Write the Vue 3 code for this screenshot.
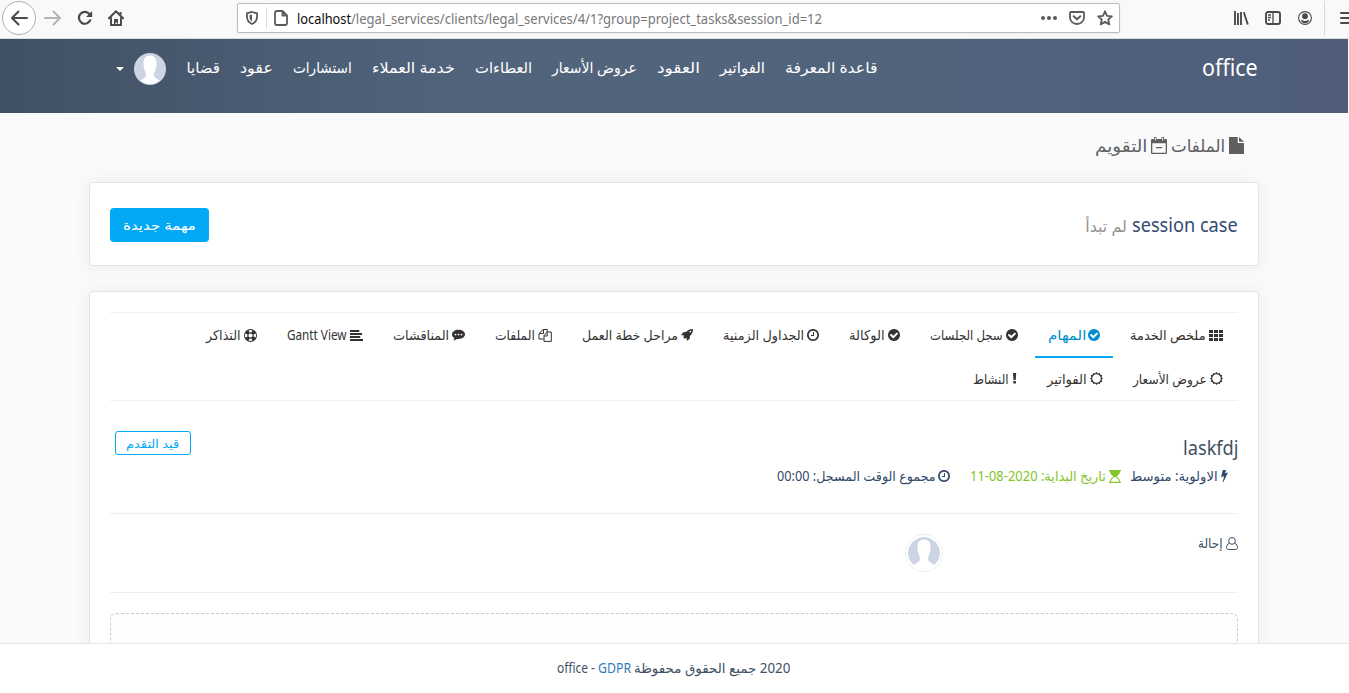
<script setup>
import { h } from 'vue'

// Stretches a run of text horizontally so that it fills its slot.
const stretch = (vnode, w) => {
  const el = vnode.el.firstChild
  el.style.transform = `scaleX(${w / el.offsetWidth})`
}
const Fit = (props) =>
  h('span', {
    class: 'fit',
    style: { width: props.w + 'px' },
    onVnodeMounted: (v) => stretch(v, props.w),
  }, [h('span', { class: 'fit-in' }, props.t)])
Fit.props = ['w', 't']

const check = { vb: '128 128 1536 1536', d: 'M1412 734q0-28-18-46l-91-90q-19-19-45-19t-45 19l-408 407-226-226q-19-19-45-19t-45 19l-91 90q-18 18-18 46 0 27 18 45l362 362q19 19 45 19 27 0 46-19l543-543q18-18 18-45zm252 162q0 209-103 385.5t-279.5 279.5-385.5 103-385.5-103-279.5-279.5-103-385.5 103-385.5 279.5-279.5 385.5-103 385.5 103 279.5 279.5 103 385.5z' }
const clock = { vb: '128 128 1536 1536', d: 'M1024 544v448q0 14-9 23t-23 9h-320q-14 0-23-9t-9-23v-64q0-14 9-23t23-9h224v-352q0-14 9-23t23-9h64q14 0 23 9t9 23zm416 352q0-148-73-273t-198-198-273-73-273 73-198 198-73 273 73 273 198 198 273 73 273-73 198-198 73-273zm224 0q0 209-103 385.5t-279.5 279.5-385.5 103-385.5-103-279.5-279.5-103-385.5 103-385.5 279.5-279.5 385.5-103 385.5 103 279.5 279.5 103 385.5z' }
const icons = {
  check,
  clock,
  grid: { vb: '0 0 14 11', d: 'M0 0h4v3H0zM5 0h4v3H5zM10 0h4v3h-4zM0 4h4v3H0zM5 4h4v3H5zM10 4h4v3h-4zM0 8h4v3H0zM5 8h4v3H5zM10 8h4v3h-4z' },
  rocket: { vb: '0 0 12 12', d: 'M12 0C9 0 6.800.9 5 3.100L2.300 3.200 0 6.300l2.500-.1.500.6-.7 1.400 1.500 1.500 1.400-.7.6.5-.1 2.500 3.100-2.300.1-2.700C11.100 5.200 12 3 12 0zM9.400 1.700a.9.9 0 1 1 0 1.800.9.9 0 0 1 0-1.800z' },
  files: { vb: '0 0 14 13', d: 'M5.500 3.500V.5h3.700v2.500M5.200.5L1 4.500V10h4.500M5.500.8V4.500H1.200M9.200 3.500V7H6M9.200 3h4.100v9.400H6V6.600L9.200 3', line: true },
  comment: { vb: '0 0 13 12', d: 'M6.500.8C2.900.8 0 2.900 0 5.600c0 1.500.9 2.900 2.400 3.700-.2.900-.7 1.600-1.300 2.300 1.500-.2 2.800-.8 3.800-1.700.5.1 1 .1 1.600.1 3.600 0 6.500-2.100 6.500-4.700S10.100.8 6.500.8zM3.500 4.700a.9.900 0 1 1 0 1.800.9.900 0 0 1 0-1.800zm3 0a.9.900 0 1 1 0 1.800.9.900 0 0 1 0-1.800zm3 0a.9.900 0 1 1 0 1.800.9.900 0 0 1 0-1.800z' },
  bars: { vb: '0 0 14 11', d: 'M0 0h10v2H0zM0 3h13v2H0zM0 6h11v2H0zM0 9h14v2H0z' },
  ring: { vb: '0 0 13 13', d: 'M6.500 0a6.500 6.500 0 1 0 0 13 6.500 6.500 0 0 0 0-13zM4.600 1.400a5.400 5.400 0 0 1 3.800 0L7.500 3.500a3 3 0 0 0-2 0zM1.400 4.600l2.100.9a3 3 0 0 0 0 2l-2.100.9a5.400 5.400 0 0 1 0-3.800zM8.400 11.600a5.400 5.400 0 0 1-3.800 0l.9-2.100a3 3 0 0 0 2 0zM6.500 8.600a2.100 2.100 0 1 1 0-4.200 2.100 2.100 0 0 1 0 4.200zM11.600 8.400l-2.100-.9a3 3 0 0 0 0-2l2.100-.9a5.400 5.400 0 0 1 0 3.800z' },
  cog: { vb: '0 0 13 13', d: 'M6.500 0l1.400 1.500 1.900-.6.500 1.900 1.900.5-.6 1.900L13 6.500l-1.400 1.300.6 1.900-1.900.5-.5 1.900-1.900-.6L6.500 13l-1.400-1.500-1.900.6-.5-1.900-1.900-.5.6-1.900L0 6.500l1.400-1.300-.6-1.900 1.900-.5.500-1.900 1.900.6zM6.500 2.200a4.300 4.300 0 1 0 0 8.600 4.300 4.300 0 0 0 0-8.600z' },
  bang: { vb: '0 0 5 11', d: 'M1 0h3.200l-.5 7H1.500zM1.300 8.100h2.600v2.500H1.300z' },
  bolt: { vb: '0 0 7 12', d: 'M1.800 0h3.400L4 3.200 7 2.600 2.400 12H1.700l1.400-5.700L0 7z' },
  hourglass: { vb: '0 0 12 13', d: 'M0 0h12v1.300H0zM0 11.700h12V13H0zM1 1.300h10C11 4 9.200 5.500 7.500 6.500 9.200 7.500 11 9 11 11.700h-1C9.800 9.300 8 8 6.500 7h-1C4 8 2.200 9.300 2 11.700H1C1 9 2.800 7.500 4.500 6.500 2.800 5.500 1 4 1 1.300z' },
  user: { vb: '0 0 12 13', d: 'M3.200 6.300C1.500 7 .5 8.700.5 10.500c0 1.100.7 2 1.700 2h7.600c1 0 1.700-.9 1.700-2 0-1.800-1-3.500-2.700-4.200M6 .5a3.300 3.300 0 1 1 0 6.800A3.300 3.300 0 0 1 6 .5z', line: true },
  file: { vb: '0 0 15 17', d: 'M0 0h8.700v5.200q0 .9.900.9H15V17H0zM10 0l5 4.800h-5z' },
  calendar: { vb: '0 0 16 17', d: 'M3 0h2.500v2h5V0H13v2h1.800Q16 2 16 3.200v12.600q0 1.200-1.200 1.200H1.200Q0 17 0 15.800V3.200Q0 2 1.200 2H3zM1.300 6.300v9.400h13.400V6.300zM5 10h6v1.300H5zM3.800.8v2.600h1V.8zM11.200.8v2.600h1V.8z' },
}
const Icon = (p) => h('svg', {
  viewBox: icons[p.n].vb, width: p.w, height: p.h, class: 'icon', preserveAspectRatio: 'none',
}, [h('path', {
  d: icons[p.n].d, 'fill-rule': 'evenodd',
  fill: icons[p.n].line ? 'none' : 'currentColor',
  stroke: icons[p.n].line ? 'currentColor' : 'none',
})])
Icon.props = ['n', 'w', 'h']

const nav = [
  ['قاعدة المعرفة', 92], ['الفواتير', 45], ['العقود', 43], ['عروض الأسعار', 85], ['العطاءات', 57],
  ['خدمة العملاء', 83], ['استشارات', 59], ['عقود', 33], ['قضايا', 34],
]
// label, text width, icon, icon width, icon height
const tabs = [
  [
    ['ملخص الخدمة', 76, 'grid', 14, 11], ['المهام', 38, 'check', 12, 12, true], ['سجل الجلسات', 73, 'check', 12, 12],
    ['الوكالة', 36, 'check', 12, 12], ['الجداول الزمنية', 81, 'clock', 12, 12], ['مراحل خطة العمل', 96, 'rocket', 12, 12],
    ['الملفات', 40, 'files', 14, 13], ['المناقشات', 56, 'comment', 13, 12], ['Gantt View', 60, 'bars', 13, 11],
    ['التذاكر', 35, 'ring', 13, 13],
  ],
  [['عروض الأسعار', 74, 'cog', 13, 13], ['الفواتير', 40, 'cog', 13, 13], ['النشاط', 36, 'bang', 5, 11]],
]
</script>

<template>
  <div class="page">
    <div class="chrome" dir="ltr">
      <div class="tools">
        <span class="back"><svg width="18" height="16" viewBox="0 0 18 16"><path d="M17 8H2M8.500 1.500L2 8l6.500 6.500" fill="none" stroke="#4a4a4c" stroke-width="2" stroke-linecap="round" stroke-linejoin="round" /></svg></span>
        <svg class="fwd" width="18" height="16" viewBox="0 0 18 16"><path d="M1 8h15M9.500 1.500L16 8l-6.500 6.500" fill="none" stroke="#b4b4b6" stroke-width="2" stroke-linecap="round" stroke-linejoin="round" /></svg>
        <svg class="reload" width="16" height="16" viewBox="0 0 16 16"><path d="M13.200 10.300A5.900 5.900 0 1 1 12.500 4.200" fill="none" stroke="#4a4a4c" stroke-width="2.200" stroke-linecap="round" /><path d="M15.200 1v6H9z" fill="#4a4a4c" /></svg>
        <svg class="home" width="16" height="16" viewBox="0 0 16 16"><path d="M1 8.300L8 1.300l7 7M3 8v7h10V8" fill="none" stroke="#4a4a4c" stroke-width="2" stroke-linecap="round" stroke-linejoin="round" /><path d="M6 9h4v6H9.200v-2.500H7.500V15H6zM11.500 2h2v3.500l-2-2z" fill="#4a4a4c" /></svg>
      </div>
      <div class="url">
        <svg width="12" height="14" viewBox="0 0 12 14"><path d="M6 1l5 1.300V6c0 3-1.800 5.500-5 7-3.200-1.500-5-4-5-7V2.300z" fill="none" stroke="#5a5a5c" stroke-width="1.800" /><path d="M6 3.500v7C4.300 9.300 3.500 8 3.500 6V4.100z" fill="#5a5a5c" /></svg>
        <i class="sep"></i>
        <svg width="14" height="16" viewBox="0 0 14 16"><path d="M3 1h5.500L13 5.500V13q0 2-2 2H3q-2 0-2-2V3q0-2 2-2zM8.500 1v4.500H13" fill="none" stroke="#5a5a5c" stroke-width="1.800" stroke-linejoin="round" /></svg>
        <span class="addr"><span class="host"><Fit :w="54" t="localhost" /></span><Fit :w="471" t="/legal_services/clients/legal_services/4/1?group=project_tasks&session_id=12" /></span>
        <span class="url-end">
          <svg width="16" height="4" viewBox="0 0 16 4"><g fill="#5a5a5c"><circle cx="2" cy="2" r="2" /><circle cx="8" cy="2" r="2" /><circle cx="14" cy="2" r="2" /></g></svg>
          <svg width="16" height="14" viewBox="0 0 16 14"><path d="M2 1h12q1 0 1 1v4.500a7 6.500 0 0 1-14 0V2q0-1 1-1z" fill="none" stroke="#5a5a5c" stroke-width="1.800" /><path d="M4.700 5.200L8 8.300l3.300-3.100" fill="none" stroke="#5a5a5c" stroke-width="2" stroke-linecap="round" stroke-linejoin="round" /></svg>
          <svg width="16" height="16" viewBox="0 0 16 16"><path d="M8 1.300l2 4.500 4.900.5-3.700 3.200 1.100 4.900L8 11.900l-4.300 2.500 1.100-4.900L1.100 6.300 6 5.800z" fill="none" stroke="#5a5a5c" stroke-width="1.800" stroke-linejoin="round" /></svg>
        </span>
      </div>
      <div class="right-tools">
        <svg width="16" height="14" viewBox="0 0 16 14"><path d="M2 0v14M5 2v12M8 1v13M10.800 1.300l4 12.200" fill="none" stroke="#4a4a4c" stroke-width="1.900" /></svg>
        <svg width="16" height="14" viewBox="0 0 16 14"><rect x="1" y="1" width="14" height="12" rx="2" fill="none" stroke="#4a4a4c" stroke-width="1.900" /><path d="M8 1v12M3 4h3M3 6.500h3M3 9h2" stroke="#4a4a4c" stroke-width="1.300" /></svg>
        <svg width="14" height="14" viewBox="0 0 14 14"><circle cx="7" cy="7" r="6.400" fill="none" stroke="#4a4a4c" stroke-width="1.100" /><circle cx="7" cy="5.200" r="2.900" fill="#4a4a4c" /><path d="M2.800 8.700q1.500.4 2.200.7 2 1.100 4 0 .7-.3 2.200-.7-.9 3.500-4.200 3.500T2.800 8.700z" fill="#4a4a4c" /></svg>
        <i class="rsep"></i>
        <svg width="9" height="12" viewBox="0 0 9 12"><path d="M1 1h9M1 6h9M1 11h9" stroke="#4a4a4c" stroke-width="2" stroke-linecap="round" /></svg>
      </div>
    </div>

    <header class="nav">
      <span class="brand"><Fit :w="56" t="office" /></span>
      <nav class="links">
        <a v-for="n in nav" :key="n[0]"><Fit :w="n[1]" :t="n[0]" /></a>
        <svg class="avatar" width="32" height="32" viewBox="0 0 32 32"><circle cx="16" cy="16" r="16" fill="#cdd4e4" /><path d="M16 2.500c4.200 0 6.500 3 6.500 7.500 0 2.500-.3 5-1 7-.7 1.800-1.500 2.500-1.500 4.500 0 3.500 3 4.500 6 6a16 16 0 0 1-20 0c3-1.500 6-2.500 6-6 0-2-.8-2.700-1.500-4.500-.7-2-1-4.500-1-7 0-4.500 2.300-7.500 6.500-7.500z" fill="#fff" /></svg>
        <i class="caret"></i>
      </nav>
    </header>

    <main class="content">
      <div class="quick">
        <Icon n="file" :w="15" :h="17" /><Fit :w="54" t="الملفات" />
        <Icon n="calendar" :w="16" :h="17" /><Fit :w="52" t="التقويم" />
      </div>

      <section class="card head">
        <div class="title"><Fit :w="106" t="session case" /><span class="muted"><Fit :w="42" t="لم تبدأ" /></span></div>
        <button class="btn"><Fit :w="73" t="مهمة جديدة" /></button>
      </section>

      <section class="card body">
        <div class="tabs">
          <div v-for="(row, i) in tabs" :key="i" class="row">
            <a v-for="t in row" :key="t[0]" :class="{ active: t[5] }">
              <Icon :n="t[2]" :w="t[3]" :h="t[4]" /><Fit :w="t[1]" :t="t[0]" />
            </a>
          </div>
        </div>

        <div class="task">
          <div>
            <div class="name"><Fit :w="55" t="laskfdj" /></div>
            <div class="meta">
              <span class="m"><Icon n="bolt" :w="7" :h="12" /><Fit :w="88" t="الاولوية: متوسط" /></span>
              <span class="m green"><Icon n="hourglass" :w="12" :h="13" /><Fit :w="136" t="تاريخ البداية: 2020-08-11" /></span>
              <span class="m last"><Icon n="clock" :w="12" :h="12" /><Fit :w="159" t="مجموع الوقت المسجل: 00:00" /></span>
            </div>
          </div>
          <span class="status"><Fit :w="53" t="قيد التقدم" /></span>
        </div>

        <div class="assign">
          <span class="who"><Icon n="user" :w="12" :h="13" /><Fit :w="25" t="إحالة" /></span>
          <span class="face"><svg width="32" height="32" viewBox="0 0 32 32"><circle cx="16" cy="16" r="16" fill="#cdd4e4" /><path d="M16 2.500c4.200 0 6.500 3 6.500 7.500 0 2.500-.3 5-1 7-.7 1.800-1.500 2.500-1.500 4.500 0 3.500 3 4.500 6 6l0 4.500H6v-4.500c3-1.500 6-2.500 6-6 0-2-.8-2.700-1.500-4.500-.7-2-1-4.500-1-7 0-4.500 2.300-7.500 6.500-7.500z" fill="#fff" /></svg></span>
        </div>
        <div class="drop"></div>
      </section>
    </main>

    <footer class="foot">
      <Fit :w="156" t="2020 جميع الحقوق محفوظة" />
      <a><Fit :w="33" t="GDPR" /></a>
      <Fit :w="38" t="- office" />
    </footer>
  </div>
</template>

<style>
html, body { overflow: hidden; background: #f9fafc; }
.fit { display: inline-flex; flex: none; white-space: nowrap; }
.fit-in { flex: none; transform-origin: 100% 50%; }
[dir="ltr"] .fit-in { transform-origin: 0 50%; }
.icon { flex: none; display: block; }
</style>

<style scoped>
* { box-sizing: border-box; }
.page {
  width: 1349px; height: 693px; overflow: hidden; direction: rtl;
  display: flex; flex-direction: column; background: #f9fafc; color: #415165;
  font-family: "Noto Sans", "DejaVu Sans", sans-serif; font-size: 13.500px; line-height: 18px;
}
.chrome {
  direction: ltr; height: 39px; flex: none; background: #f9f9fa; border-bottom: 1px solid #dcdcdc;
  display: flex; align-items: flex-start; overflow: hidden;
}
.tools { width: 237px; height: 36px; display: flex; align-items: center; padding-left: 2px; }
.back {
  width: 34px; height: 34px; border: 1px solid #b0b0b2; border-radius: 50%; background: #fff;
  display: flex; align-items: center; justify-content: center;
}
.fwd { margin-left: 8px; }
.reload { margin-left: 15px; }
.home { margin-left: 15px; }
.url {
  width: 883px; height: 30px; margin-top: 3px; background: #fff; border: 1px solid #bcbcbe; border-radius: 2px;
  display: flex; align-items: center; padding: 0 6px 0 8px; box-shadow: 0 1px 3px rgba(0,0,0,.05);
}
.sep { width: 1px; height: 22px; background: #dedede; margin: 0 7px 0 8px; }
.addr { display: flex; margin-left: 9px; padding-top: 2px; font-size: 14px; color: #77777a; }
.host { color: #0c0c0d; display: flex; }
.url-end { margin-left: auto; display: flex; align-items: center; gap: 12px; }
.right-tools { margin-left: 113px; height: 36px; display: flex; align-items: center; }
.right-tools svg + svg { margin-left: 16px; }
.right-tools svg:nth-child(3) { margin-left: 17px; }
.rsep { width: 1px; height: 34px; background: #d7d7db; margin-left: 12px; margin-right: 15px; }

.nav {
  height: 74px; flex: none; margin-right: 1px; padding: 13px 90px 0 116px; display: flex; align-items: flex-start; justify-content: space-between;
  background: linear-gradient(90deg, #415165 0%, #51647c 35%, #51647c 65%, #4f5d7a 100%); color: #fff;
}
.brand { font-size: 23px; line-height: 30px; display: flex; }
.links { display: flex; align-items: center; gap: 20px; height: 34px; font-size: 15px; }
.links a { display: flex; height: 22px; }
.caret { border: 4px solid transparent; border-top-color: #fff; border-bottom: 0; margin-right: -10px; }

.content { flex: 1; min-height: 0; overflow: hidden; padding: 0 90px 0 89px; }
.quick { height: 69px; padding: 0 15px 4px 0; display: flex; align-items: center; gap: 4px; font-size: 17px; color: #5f5f5f; }
.card { background: #fff; border: 1px solid #e2e4e8; border-radius: 4px; box-shadow: 0 1px 15px 1px rgba(90, 90, 90, .08); padding: 0 20px; }
.head { height: 84px; display: flex; align-items: center; justify-content: space-between; }
.title { display: flex; align-items: baseline; gap: 5px; padding-top: 3px; font-size: 19px; color: #334b73; line-height: 28px; }
.muted { font-size: 16px; color: #949494; display: flex; }
.btn {
  width: 99px; height: 34px; margin-top: 1px; border: 0; border-radius: 4px; background: #03a9f4; color: #fff;
  font: inherit; font-size: 13px; display: flex; align-items: center; justify-content: center; padding: 0;
}
.body { margin-top: 25px; height: 460px; padding-top: 20px; }
.tabs { height: 89px; border-top: 1px solid #f0f0f0; border-bottom: 1px solid #f0f0f0; color: #333; }
.row { display: flex; gap: 30px; padding-right: 15px; height: 45px; align-items: stretch; }
.row + .row { height: 42px; }
.row a { display: flex; align-items: center; gap: 3px; position: relative; padding-bottom: 1px; }
.row a.active { color: #008ece; gap: 2px; }
.row a.active::after { content: ""; position: absolute; left: -13px; right: -13px; bottom: 0; height: 2px; background: #03a9f4; }
.task { height: 113px; border-bottom: 1px solid #eee; display: flex; justify-content: space-between; padding-top: 30px; }
.name { font-size: 19.500px; line-height: 34px; height: 36px; display: flex; color: #415165; }
.meta { display: flex; padding-right: 10px; color: #334a6b; }
.m { display: flex; align-items: center; gap: 3px; }
.m.green { color: #84c529; margin-right: 9px; gap: 3px; }
.m.last { margin-right: 20px; gap: 2px; }
.status {
  margin-left: 5px; width: 76px; height: 24px; border: 1px solid #03a9f4; border-radius: 3px; color: #03a9f4;
  font-size: 12px; display: flex; align-items: center; justify-content: center; padding-top: 1px;
}
.assign { height: 79px; border-bottom: 1px solid #eee; display: flex; padding-top: 20px; }
.who { display: flex; align-items: center; gap: 3px; height: 18px; width: 295px; }
.face { width: 38px; height: 38px; border: 1px solid #eee; border-radius: 50%; display: flex; align-items: center; justify-content: center; overflow: hidden; }
.face svg { border-radius: 50%; }
.drop { margin-top: 20px; height: 160px; border: 1px dashed #c0ccda; border-radius: 6px; background: #fbfdff; }
.foot {
  height: 50px; flex: none; background: #fff; border-top: 1px solid #e3e5e8; padding: 0 2px 2px 0;
  display: flex; align-items: center; justify-content: center; gap: 3px; color: #415165;
}
.foot a { color: #337ab7; display: flex; }
</style>
